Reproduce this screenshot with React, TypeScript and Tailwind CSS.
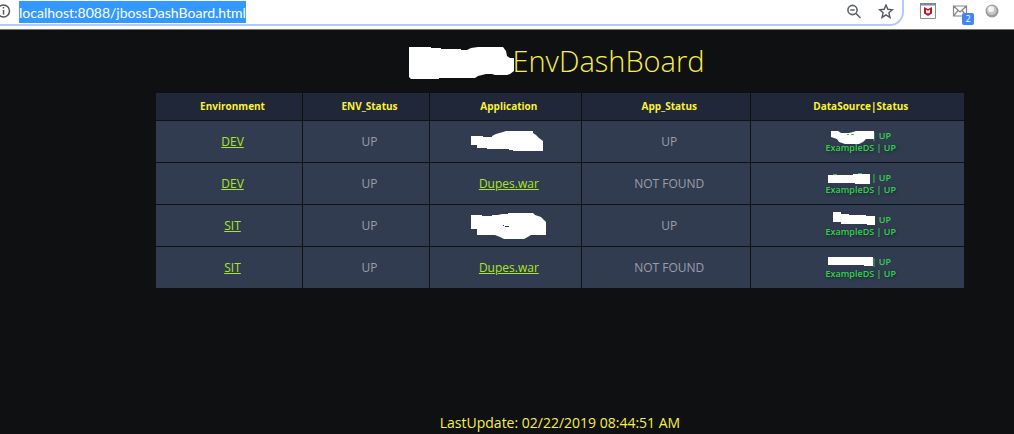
import React from 'react';

type Row = {
  env: string;
  app: string | null;
  appMask?: string;
  appStatus: string;
  dsMask: string;
  dsTrace?: string;
};

const rows: Row[] = [
  {
    env: 'DEV',
    app: null,
    appMask: 'M0 8h12v1h9V8l4-2 7-2 3-1h27v2l3 2 3 3 4 3v10H42v-1h-4v-1H16v-1H6v-3H0z',
    appStatus: 'UP',
    dsMask: 'M5 3h7l3 2h8l4-1 3-1h18v8h-8l-3 3-4 2H19l-6-2-2-3-6-2z',
    dsTrace: 'M21 6h2v1h-2zM25 6h3v1h-3z',
  },
  {
    env: 'DEV',
    app: 'Dupes.war',
    appStatus: 'NOT FOUND',
    dsMask: 'M2 5h25V4h17v10H29v-1H2z',
    dsTrace: 'M7 4h4v1H7zM32 3h4v1h-4z',
  },
  {
    env: 'SIT',
    app: null,
    appMask: 'M0 3h11v1h10V3h6l4-1h6V1h25l2 2 6 2 3 3 2 2v13H60l-5 3-2 1H33l-4-2-5-2H6v-6H0z',
    appStatus: 'UP',
    dsMask: 'M7 0h8v2h8v1h17v1h9v9h-8v-1H15v-2H7z',
  },
  {
    env: 'SIT',
    app: 'Dupes.war',
    appStatus: 'NOT FOUND',
    dsMask: 'M2 3h45v9h-9v-1H2z',
  },
];

function AddressBar() {
  return (
    <header className="flex h-[29px] items-start bg-white">
      <div className="flex h-[26px] min-w-0 flex-1 items-center rounded-br-[14px] border-r-2 border-b-2 border-[#b4cbf0] pr-2">
        <svg width="12" height="24" viewBox="0 0 12 24" className="shrink-0" fill="none" stroke="#555" strokeWidth="1.5">
          <circle cx="3.5" cy="11" r="6" />
          <path d="M3.5 10v4.5M3.5 7v1.6" />
        </svg>
        <input
          aria-label="Address"
          defaultValue="localhost:8088/jbossDashBoard.html"
          className="ml-[7px] h-[22px] field-sizing-content bg-[#3399ff] font-[Lato,sans-serif] text-[14px] text-white outline-none"
        />
        <button aria-label="Zoom" className="ml-auto">
          <svg width="16" height="16" viewBox="0 0 16 16" className="block" fill="none" stroke="#5f6368" strokeWidth="1.6">
            <circle cx="6.5" cy="6" r="4.6" />
            <path d="M10 9.5l4.5 4.5M4.3 6h4.4" />
          </svg>
        </button>
        <button aria-label="Bookmark this page" className="ml-4">
          <svg width="16" height="16" viewBox="0 0 16 16" className="block" fill="none" stroke="#55595e" strokeWidth="1.4">
            <path d="M8 1l1.8 4.3 4.7.4-3.6 3.1 1.1 4.6L8 10.9l-4 2.5 1.1-4.6L1.5 5.7l4.7-.4z" />
          </svg>
        </button>
      </div>
      <div className="flex h-[22px] w-[110px] shrink-0 items-center pl-4">
        <button aria-label="Security extension">
          <svg width="16" height="16" viewBox="0 0 16 16" className="block">
            <path d="M.5.5h15v15H.5z" fill="#fff" stroke="#8b8b8b" />
            <path d="M0 0h16v2.5H0z" fill="#77889a" />
            <path d="M4 4l4 2 4-2v6.6L8 13l-4-2.4z" fill="#c01828" />
            <path d="M6 6.8l2 1 2-1v2.8l-2 1-2-1z" fill="#fff" />
          </svg>
        </button>
        <button aria-label="Mail, 2 unread" className="relative ml-4">
          <svg width="16" height="16" viewBox="0 0 16 16" className="block" fill="none" stroke="#858585" strokeWidth="1.2">
            <path d="M1.5 3h13v10h-13zM1.5 3L8 9l6.5-6M1.5 13L6 7.5M14.5 13L10 7.5" />
          </svg>
          <span className="absolute top-[10px] left-[10px] flex h-3 w-3 items-center justify-center rounded-xs bg-[#4285f4] text-[9px] text-white">
            2
          </span>
        </button>
        <button aria-label="Extension" className="ml-4">
          <svg width="16" height="16" viewBox="0 0 16 16" className="block">
            <circle cx="8" cy="8" r="6.5" fill="#999" />
            <circle cx="7.7" cy="7.3" r="4.9" fill="#c6c6c6" />
            <circle cx="7" cy="6.2" r="3" fill="#f4f4f4" />
          </svg>
        </button>
      </div>
    </header>
  );
}

function DataSource({ mask, trace }: { mask: string; trace?: string }) {
  return (
    <div className="relative inline-block text-right align-middle text-[9px] leading-3 font-semibold text-[#2ed34a]">
      <div className="pr-[5px]">| UP</div>
      <div className="[text-shadow:1px_1px_3px_#1b2330]">ExampleDS | UP</div>
      <svg width="50" height="18" viewBox="0 0 50 18" className="absolute -top-[2px] left-0">
        <path d={mask} fill="#fff" />
        {trace && <path d={trace} fill="#2ecc40" />}
      </svg>
    </div>
  );
}

const headings = ['Environment', 'ENV_Status', 'Application', 'App_Status', 'DataSource|Status'];
const th = 'h-[27px] border-r border-[#0f1012] p-0 pl-[7px] font-bold last:border-r-0';
const td = 'h-[42px] border-t border-r border-[#0f1012] p-0 pl-[7px] last:border-r-0';
const link = 'text-[#a8e628] underline';

export default function App() {
  return (
    <div className="min-h-screen bg-[#0f1012] font-['Open_Sans',sans-serif]">
      <AddressBar />
      <div className="border-t border-[#777] pr-[50px] pl-[156px]">
        <h1 className="mb-0.5 flex h-[61px] items-center justify-center pr-[6px] text-[29px] font-light text-[#f7ee4d]">
          <svg width="105" height="34" viewBox="0 0 105 34" className="mt-1 -mr-0.5" aria-hidden="true">
            <path
              d="M0 1h22v1h10v1h20v1h6l4-2 7-1h25l3 4 1 5 3 2h4v13l-4 3-3 1H86l-3-1h-6l-8 2-3 2H30v1H2l-2-2z"
              fill="#fff"
            />
          </svg>
          <span>EnvDashBoard</span>
        </h1>
        <table className="w-full table-fixed border-separate border-spacing-0 text-center text-xs text-[#9a9eaa]">
          <colgroup>
            <col className="w-[18.2%]" />
            <col className="w-[15.7%]" />
            <col className="w-[18.8%]" />
            <col className="w-[20.9%]" />
            <col className="w-[26.4%]" />
          </colgroup>
          <thead className="bg-[#1f2739] text-[10px] text-[#fbf236]">
            <tr>
              {headings.map((h) => (
                <th key={h} scope="col" className={th}>{h}</th>
              ))}
            </tr>
          </thead>
          <tbody className="bg-[#323c50]">
            {rows.map((r, i) => (
              <tr key={i}>
                <td className={td}><a href="#" className={link}>{r.env}</a></td>
                <td className={td}>UP</td>
                <td className={td}>
                  {r.app ? (
                    <a href="#" className={link}>{r.app}</a>
                  ) : (
                    <svg width="76" height="28" viewBox="0 0 76 28" className="inline-block">
                      <path d={r.appMask} fill="#fff" />
                      {i === 2 && <path d="M32 13h1v1h-1zM34 14h4v1h-4z" fill="#323c50" />}
                    </svg>
                  )}
                </td>
                <td className={td}>{r.appStatus}</td>
                <td className={td}><DataSource mask={r.dsMask} trace={r.dsTrace} /></td>
              </tr>
            ))}
          </tbody>
        </table>
        <p className="pt-[125px] text-center text-sm leading-5 text-[#f7ee4d]">
          LastUpdate: 02/22/2019 08:44:51 AM
        </p>
      </div>
    </div>
  );
}
